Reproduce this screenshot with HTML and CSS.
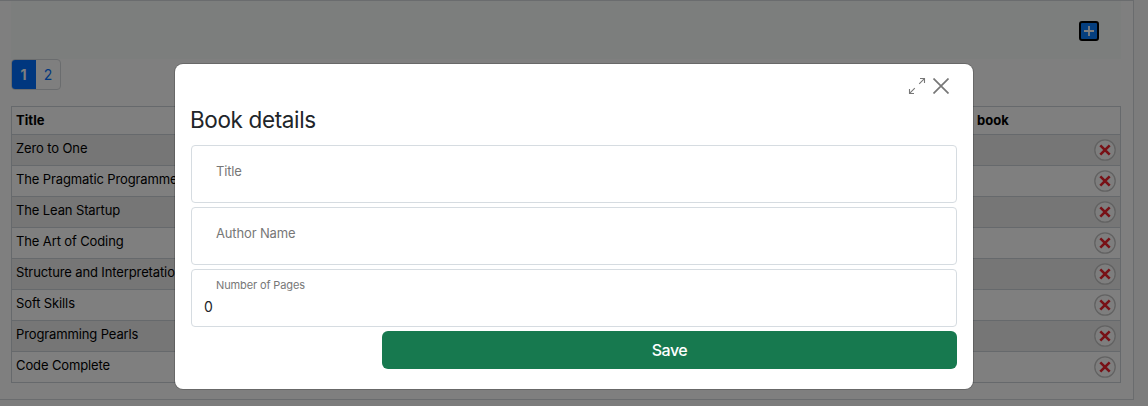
FILE: index.html
```html
<!DOCTYPE html>
<html lang="en">
<head>
<meta charset="utf-8">
<title>Books</title>
<link rel="stylesheet" href="styles.css">
</head>
<body>
<svg class="defs" width="0" height="0" aria-hidden="true">
  <symbol id="remove" viewBox="0 0 22 22">
    <circle cx="11" cy="11" r="10.2" fill="#fdfdfd" stroke="#c4c4c4" stroke-width="1.3"/>
    <path d="M6.3 6.3 15.7 15.7M15.7 6.3 6.3 15.7" stroke="#f0222d" stroke-width="2.6"/>
  </symbol>
</svg>
<main class="panel">
  <div class="toolbar">
    <button class="add" aria-label="Add"><svg width="10" height="10" viewBox="0 0 10 10"><path d="M5 0v10M0 5h10" stroke="#fff" stroke-width="1.8"/></svg></button>
  </div>
  <nav class="pages"><a class="page active">1</a><a class="page">2</a></nav>
  <div class="table">
    <div class="row head"><span>Title</span><span class="last">book</span></div>
    <div class="row"><span>Zero to One</span><svg class="del"><use href="#remove"/></svg></div>
    <div class="row"><span>The Pragmatic Programmer</span><svg class="del"><use href="#remove"/></svg></div>
    <div class="row"><span>The Lean Startup</span><svg class="del"><use href="#remove"/></svg></div>
    <div class="row"><span>The Art of Coding</span><svg class="del"><use href="#remove"/></svg></div>
    <div class="row"><span>Structure and Interpretation</span><svg class="del"><use href="#remove"/></svg></div>
    <div class="row"><span>Soft Skills</span><svg class="del"><use href="#remove"/></svg></div>
    <div class="row"><span>Programming Pearls</span><svg class="del"><use href="#remove"/></svg></div>
    <div class="row"><span>Code Complete</span><svg class="del"><use href="#remove"/></svg></div>
  </div>
</main>
<div class="backdrop"></div>
<section class="modal" role="dialog">
  <div class="actions">
    <svg width="18" height="18" viewBox="0 0 18 18" fill="none" stroke="#777" stroke-width="1.1"><path d="M12 1.5h4.5V6M16.2 1.8l-5 5M1.5 12v4.5H6M1.8 16.2l5-5"/></svg>
    <svg width="16" height="16" viewBox="0 0 16 16" stroke="#777" stroke-width="1.7"><path d="M.5.5l15 15M15.5.5l-15 15"/></svg>
  </div>
  <h2 class="title">Book details</h2>
  <div class="field"><span class="placeholder">Title</span></div>
  <div class="field"><span class="placeholder">Author Name</span></div>
  <div class="field"><span class="label">Number of Pages</span><span class="value">0</span></div>
  <button class="save">Save</button>
</section>
</body>
</html>
```
FILE: styles.css
```css
* { box-sizing: border-box; }
body { margin: 0; height: 406px; overflow: hidden; background: #f8f8f8; font-family: Inter, sans-serif; }
.defs { position: absolute; }
.panel { width: 1134px; height: 400px; padding: 0 12px 0 11px; background: #fff; border: 1px solid #d5d8dc; border-left: 0; }
.toolbar { height: 58px; padding: 20px 22px 0 0; display: flex; justify-content: flex-end; align-items: flex-start; background: #f8fcfa; }
.add { width: 20px; height: 20px; padding: 0; border: 2px solid #000; border-radius: 3px; background: #0b7fff; display: flex; align-items: center; justify-content: center; }
.pages { display: flex; width: 50px; height: 31px; border: 1px solid #d5d8dc; border-radius: 4px; overflow: hidden; font-size: 14px; line-height: 30px; }
.page { flex: 1; text-align: center; color: #006fff; }
.active { flex: 0 0 25px; margin: -1px 0 -1px -1px; padding-top: 1px; background: #006fff; color: #fff; font-weight: 700; }
.table { margin-top: 16px; border: 1px solid #cdd3d9; font-size: 13px; color: #000; }
.row { height: 31px; padding: 0 4px; display: flex; justify-content: space-between; line-height: 26px; border-top: 1px solid #cdd3d9; letter-spacing: -0.12px; }
.row:nth-child(even) { background: #ececec; }
.head { height: 27px; border-top: 0; font-weight: 700; line-height: 27px; letter-spacing: 0.05px; }
.last { width: 139px; }
.del { width: 22px; height: 22px; margin-top: 4px; }
.backdrop { position: absolute; inset: 0; background: rgba(0, 0, 0, 0.5); }
.modal { position: absolute; left: 175px; top: 64px; width: 798px; height: 325px; padding: 13px 16px; border-radius: 8px; background: #fff; box-shadow: 0 0 0 1px rgba(0, 0, 0, 0.18); display: flex; flex-direction: column; }
.actions { display: flex; justify-content: flex-end; align-items: center; gap: 7px; height: 18px; padding-right: 8px; }
.title { margin: 9px 0 10px -1px; height: 31px; line-height: 32px; font-size: 22.5px; font-weight: 400; letter-spacing: -0.37px; color: #212529; }
.field { height: 58px; margin-bottom: 4px; padding: 0 24px; border: 1px solid #d6dce1; border-radius: 4px; display: flex; flex-direction: column; font-size: 13px; color: #777; }
.placeholder { line-height: 51px; letter-spacing: -0.15px; }
.label { font-size: 11px; line-height: 14px; margin-top: 8px; letter-spacing: -0.12px; }
.value { margin: 5px 0 0 -12px; font-size: 14px; line-height: 20px; color: #212529; }
.save { align-self: flex-end; width: 575px; height: 38px; padding: 0; border: 0; border-radius: 6px; background: #17794f; color: #fff; font: 500 16px Inter, sans-serif; letter-spacing: -0.5px; }
```
